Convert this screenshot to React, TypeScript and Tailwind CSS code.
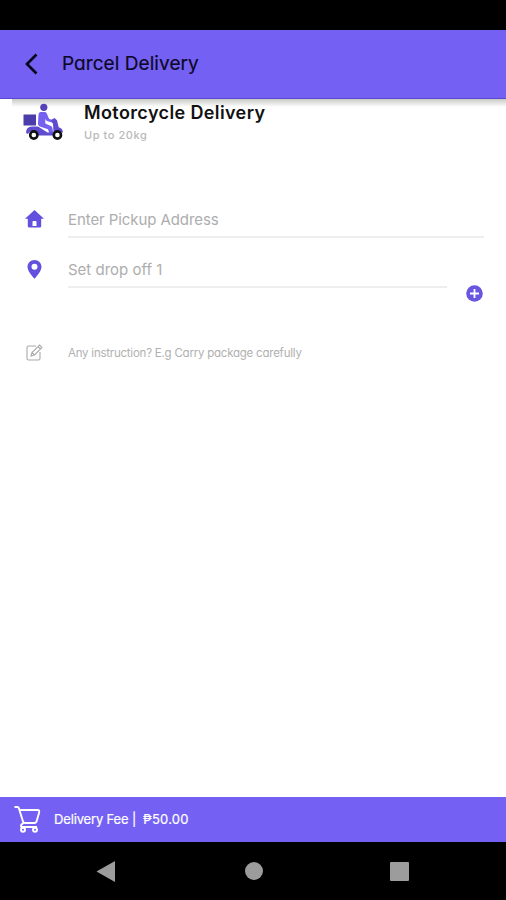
import React from 'react';

const ScooterIcon: React.FC = () => (
  <svg width="40" height="38" viewBox="0 0 40 38" fill="none">
    <rect x="0.5" y="11.5" width="12.5" height="11" fill="#4b3daa" />
    <circle cx="20.8" cy="4.3" r="3.600" fill="#5543b8" />
    {/* Rider */}
    <path d="M17.500 9h4q1.500 0 2.200 1.300l2.300 5.400 4.500 1.800-.7 2.200-6-1.700-1.500-2v4.500l5.500 2.500q1.400.6 1.600 2l.8 5h-4l-1.200-3.800-7.400-2.500q-2.800-.8-2.600-3.500l.5-8.500q.2-2.700 2-2.700z" fill="#7461f0" />
    {/* Body */}
    <path d="M3 30q0-6.500 6-6.500h6l9.500 6h6l-.5-8.500-2-4 3.500-2 2.500 2.200 1.700 7q4 1 4.300 5.300h-2.500q-5-2-7.500 3H14.500q-.5-4.500-5-4.500-3 0-4.500 3z" fill="#5f4cd0" />
    <circle cx="10.8" cy="32" r="3.600" fill="#fff" stroke="#111" strokeWidth="2.600" />
    <circle cx="34.400" cy="32" r="3.600" fill="#fff" stroke="#111" strokeWidth="2.600" />
  </svg>
);

const App: React.FC = () => {
  return (
    <div className="flex h-[900px] w-[506px] flex-col overflow-hidden bg-white font-['Inter',sans-serif] [font-feature-settings:'cv11']">
      {/* Status bar */}
      <div className="h-[30px] shrink-0 bg-black" />

      {/* Header */}
      <header className="flex h-[69px] shrink-0 items-center border-b border-[#5b48cf] bg-[#7461f3] pl-6">
        <svg width="15" height="22" viewBox="0 0 15 22" fill="none" stroke="#08061a" strokeWidth="2.700">
          <path d="M12.500 1.500L3 11l9.500 9.500" />
        </svg>
        <h1 className="ml-[23px] text-[19px] leading-6 tracking-[0.060px] text-[#0c0826] [-webkit-text-stroke:0.2px]">Parcel Delivery</h1>
      </header>
      <div className="ml-3 h-2 shrink-0 bg-linear-to-b from-[#c9c9c6] to-white" />

      <main className="flex grow flex-col">
        {/* Vehicle */}
        <section className="-mt-2 flex h-[60px] pl-[23px] pt-[4px]">
          <ScooterIcon />
          <div className="ml-[21px] -mt-[2px]">
            <h2 className="text-[18px] font-semibold leading-6 tracking-[0.380px] text-[#111]">Motorcycle Delivery</h2>
            <p className="mt-[2px] text-[11px] font-medium leading-4 tracking-[0.560px] text-[#b9b9b9]">Up to 20kg</p>
          </div>
        </section>

        {/* Addresses */}
        <div className="mt-[43px] flex h-[36px] items-start pl-[25px]">
          <svg className="mt-[8px]" width="19" height="18" viewBox="0 0 19 18" fill="#6350de">
            <path fillRule="evenodd" d="M9.500 0L19 8.800h-2.800V16q0 1.500-1.500 1.500H4.300Q2.800 17.500 2.800 16V8.800H0zM7.500 16h4v-4q0-1-1-1h-2q-1 0-1 1z" />
          </svg>
          <div className="ml-6 h-[36px] w-[416px] border-b-2 border-[#eeeeee] pt-[6px] text-[15px] leading-6 tracking-[-0.080px] text-[#adadad]">
            Enter Pickup Address
          </div>
        </div>
        <div className="mt-[14px] flex h-[36px] items-start pl-[27px]">
          <svg className="mt-[8px]" width="15" height="19" viewBox="0 0 15 19" fill="#6350de">
            <path fillRule="evenodd" d="M7.500 0C11.500 0 14.500 3 14.500 6.800c0 4-4 8.500-7 12-3-3.500-7-8-7-12C.5 3 3.500 0 7.500 0zm0 3.800a3 3 0 100 6 3 3 0 000-6z" />
          </svg>
          <div className="ml-[26px] h-[36px] w-[379px] border-b-2 border-[#eeeeee] pt-[6px] text-[15px] leading-6 text-[#adadad]">
            Set drop off 1
          </div>
        </div>
        <div className="-mt-[3px] flex justify-end pr-[23px]">
          <svg width="17" height="17" viewBox="0 0 17 17" fill="none">
            <circle cx="8.500" cy="8.500" r="8.300" fill="#6856e0" />
            <path d="M8.500 4v9M4 8.500h9" stroke="#fff" strokeWidth="1.800" />
          </svg>
        </div>

        {/* Instruction */}
        <div className="mt-[42px] flex items-center pl-[26px]">
          <svg width="17" height="17" viewBox="0 0 17 17" fill="none" stroke="#aaa" strokeWidth="1.100">
            <path d="M10 2H2.500Q1 2 1 3.500v11Q1 16 2.500 16h10q1.500 0 1.500-1.500V8" />
            <path d="M5 12l1-3.500 7.500-7.500 2.500 2.500-7.500 7.500zM12 2.500L14.500 5M6 8.500l2.500 2.500" />
          </svg>
          <span className="ml-[25px] text-[11.500px] leading-4 tracking-[-0.230px] text-[#b0b0b0]">Any instruction? E.g Carry package carefully</span>
        </div>
      </main>

      {/* Fee bar */}
      <footer className="flex h-[45px] shrink-0 items-center bg-[#7461f3] pl-[14px] text-white">
        <svg className="-mt-[2px]" width="27" height="28" viewBox="0 0 27 28" fill="none" stroke="#fff" strokeWidth="1.900" strokeLinejoin="round">
          <path d="M.5 2H3.500q1 0 1.300 1L9 16.500q.4 1.500 2 1.500h9.500q1.400 0 2-1.300L25 8q1-3-1.500-3H6" />
          <path d="M9.500 18l-2 1.500Q6 22 8.500 22H23" />
          <circle cx="9" cy="24.800" r="2" />
          <circle cx="21" cy="24.800" r="2" />
        </svg>
        <div className="-mt-[2px] ml-[13px] flex text-[13px] leading-5 [-webkit-text-stroke:0.2px]">
          <span className="w-[89px] tracking-[-0.150px]">Delivery Fee |</span>
          <span className="tracking-[0.250px]">₱50.00</span>
        </div>
      </footer>

      {/* System navigation */}
      <nav className="flex h-[58px] shrink-0 items-center bg-black pl-[96px]">
        <svg width="19" height="21" viewBox="0 0 19 21" fill="#9c9c9c">
          <path d="M.5 10.500L19 0v21z" />
        </svg>
        <div className="ml-[130px] size-[18px] rounded-full bg-[#9c9c9c]" />
        <div className="ml-[127px] size-[19px] rounded-[1px] bg-[#9c9c9c]" />
      </nav>
    </div>
  );
};

export default App;
